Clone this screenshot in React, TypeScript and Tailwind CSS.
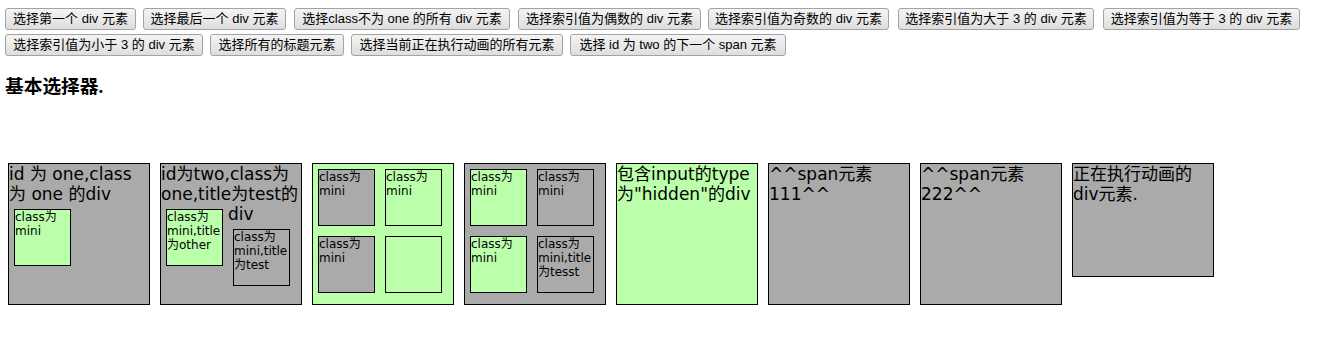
import React from 'react';

// toolbar buttons, two rows, widths taken from the screenshot
const rowOne = [
  { label: '选择第一个 div 元素', cls: 'ml-[5px] w-[131px]' },
  { label: '选择最后一个 div 元素', cls: 'ml-[7px] w-[143px]' },
  { label: '选择class不为 one 的所有 div 元素', cls: 'ml-[8px] w-[216px]' },
  { label: '选择索引值为偶数的 div 元素', cls: 'ml-[8px] w-[183px]' },
  { label: '选择索引值为奇数的 div 元素', cls: 'ml-[7px] w-[181px]' },
  { label: '选择索引值为大于 3 的 div 元素', cls: 'ml-[9px] w-[196px]' },
  { label: '选择索引值为等于 3 的 div 元素', cls: 'ml-[9px] w-[197px]' },
];

const rowTwo = [
  { label: '选择索引值为小于 3 的 div 元素', cls: 'ml-[5px] w-[198px]' },
  { label: '选择所有的标题元素', cls: 'ml-[7px] w-[134px]' },
  { label: '选择当前正在执行动画的所有元素', cls: 'ml-[7px] w-[212px]' },
  { label: '选择 id 为 two 的下一个 span 元素', cls: 'ml-[7px] w-[216px]' },
];

const Btn = ({ label, cls }: { label: string; cls: string }) => (
  <button
    className={`${cls} h-[22px] shrink-0 rounded-[3px] border border-[#a3a3a3] bg-gradient-to-b from-[#f4f4f4] to-[#dedede] text-center text-[13px] leading-[20px] text-black whitespace-nowrap font-['Liberation_Sans','Noto_Sans_CJK_SC',sans-serif]`}
  >
    {label}
  </button>
);

const Mini = ({ green, children }: { green?: boolean; children?: React.ReactNode }) => (
  <div
    className={`float-left m-[5px] h-[57px] w-[57px] border border-black text-[12px] leading-[14px] ${
      green ? 'bg-[#bbffaa]' : 'bg-[#aaaaaa]'
    }`}
  >
    {children}
  </div>
);

const Box = ({ green, className, children }: { green?: boolean; className?: string; children?: React.ReactNode }) => (
  <div
    className={`w-[142px] shrink-0 overflow-hidden border border-black text-[17px] leading-[20px] text-black ${
      green ? 'bg-[#bbffaa]' : 'bg-[#aaaaaa]'
    } ${className ?? 'h-[142px]'}`}
  >
    {children}
  </div>
);

export default function App() {
  return (
    <div className="h-[346px] w-[1323px] overflow-hidden bg-white">
      <div className="flex flex-col gap-y-[4px] pt-[8px]">
        <div className="flex">
          {rowOne.map((b) => (
            <Btn key={b.label} {...b} />
          ))}
        </div>
        <div className="flex">
          {rowTwo.map((b) => (
            <Btn key={b.label} {...b} />
          ))}
        </div>
      </div>

      <h3 className="ml-[5px] mt-[20px] h-[22px] text-[18.72px] leading-[22px] font-bold text-black font-['Liberation_Serif','Noto_Sans_CJK_SC',serif]">
        基本选择器.
      </h3>

      <div className="mt-[65px] flex items-start gap-[10px] pl-[8px] font-['DejaVu_Sans','Noto_Sans_CJK_SC',sans-serif]">
        <Box>
          id 为 one,class
          <br />
          为 one 的div
          <Mini green>
            class为
            <br />
            mini
          </Mini>
        </Box>

        <Box>
          <span className="whitespace-nowrap">id为two,class为</span>
          <br />
          <span className="whitespace-nowrap">one,title为test的</span>
          <br />
          <Mini green>
            class为
            <br />
            mini,title
            <br />
            为other
          </Mini>
          div
          <Mini>
            class为
            <br />
            mini,title
            <br />
            为test
          </Mini>
        </Box>

        <Box green>
          <Mini>
            class为
            <br />
            mini
          </Mini>
          <Mini green>
            class为
            <br />
            mini
          </Mini>
          <Mini>
            class为
            <br />
            mini
          </Mini>
          <Mini green />
        </Box>

        <Box>
          <Mini green>
            class为
            <br />
            mini
          </Mini>
          <Mini>
            class为
            <br />
            mini
          </Mini>
          <Mini green>
            class为
            <br />
            mini
          </Mini>
          <Mini>
            class为
            <br />
            mini,title
            <br />
            为tesst
          </Mini>
        </Box>

        <Box green>
          <span className="whitespace-nowrap">包含input的type</span>
          <br />
          <span className="whitespace-nowrap">为"hidden"的div</span>
          <input type="hidden" />
        </Box>

        <Box>
          ^^span元素
          <br />
          111^^
        </Box>

        <Box>
          ^^span元素
          <br />
          222^^
        </Box>

        <Box className="h-[114px]">
          正在执行动画的
          <br />
          div元素.
        </Box>
      </div>
    </div>
  );
}
